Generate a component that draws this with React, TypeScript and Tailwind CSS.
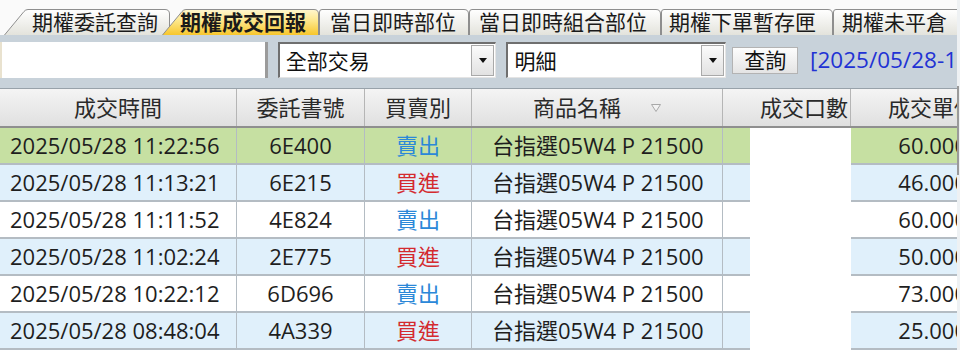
import React from 'react';

const font = "font-['Open_Sans','Noto_Sans_CJK_TC',sans-serif]";

type Tab = { label: string; w: number; cls: string; pad: string; slant?: boolean; active?: boolean };

const tabs: Tab[] = [
  { label: '期權委託查詢', w: 166, cls: 'w-[166px]', pad: 'pl-[28px]', slant: true },
  { label: '期權成交回報', w: 157, cls: 'w-[157px] -ml-[8px] z-10', pad: 'pl-[18px]', slant: true, active: true },
  { label: '當日即時部位', w: 150, cls: 'w-[150px]', pad: 'pl-[11px]' },
  { label: '當日即時組合部位', w: 192, cls: 'w-[192px]', pad: 'pl-[10px]' },
  { label: '期權下單暫存匣', w: 172, cls: 'w-[172px]', pad: 'pl-[8px]' },
  { label: '期權未平倉', w: 130, cls: 'w-[130px] shrink-0', pad: 'pl-[9px]' },
];

type Row = { time: string; no: string; side: '賣出' | '買進'; price: string; bg: string };

const rows: Row[] = [
  { time: '2025/05/28 11:22:56', no: '6E400', side: '賣出', price: '60.000', bg: 'bg-[#c6e0a2]' },
  { time: '2025/05/28 11:13:21', no: '6E215', side: '買進', price: '46.000', bg: 'bg-[#e0f0fb]' },
  { time: '2025/05/28 11:11:52', no: '4E824', side: '賣出', price: '60.000', bg: 'bg-white' },
  { time: '2025/05/28 11:02:24', no: '2E775', side: '買進', price: '50.000', bg: 'bg-[#e0f0fb]' },
  { time: '2025/05/28 10:22:12', no: '6D696', side: '賣出', price: '73.000', bg: 'bg-white' },
  { time: '2025/05/28 08:48:04', no: '4A339', side: '買進', price: '25.000', bg: 'bg-[#e0f0fb]' },
];

function TabShape({ w, slant, active, id }: { w: number; slant?: boolean; active?: boolean; id: string }) {
  const d = slant
    ? `M0.5 26 L20 2.5 Q21.5 0.5 24 0.5 L${w - 5} 0.5 Q${w - 0.5} 0.5 ${w - 0.5} 5 L${w - 0.5} 26`
    : `M0.5 26 L0.5 3 Q0.5 0.5 3 0.5 L${w - 5} 0.5 Q${w - 0.5} 0.5 ${w - 0.5} 5 L${w - 0.5} 26`;
  return (
    <svg className="absolute inset-0" width={w} height={26} viewBox={`0 0 ${w} 26`}>
      <defs>
        <linearGradient id={id} x1="0" y1="0" x2="0" y2="1">
          {active ? (
            <>
              <stop offset="0" stopColor="#fff7cf" />
              <stop offset="0.45" stopColor="#fde78a" />
              <stop offset="1" stopColor="#f7c62c" />
            </>
          ) : (
            <>
              <stop offset="0" stopColor="#ffffff" />
              <stop offset="1" stopColor="#e3e3dc" />
            </>
          )}
        </linearGradient>
      </defs>
      <path d={d} fill={`url(#${id})`} stroke="#8e8e8e" strokeWidth="1" />
    </svg>
  );
}

function Select({ label, cls }: { label: string; cls: string }) {
  return (
    <div className={`${cls} h-[36px] flex bg-white border-t-2 border-l-2 border-[#6f6f6f] border-r border-b border-r-[#e4e4e4] border-b-[#e4e4e4]`}>
      <div className="flex-1 pl-[6px] text-[21px] leading-[34px] text-[#111]">{label}</div>
      <div className="w-[23px] my-[1px] mr-[1px] bg-gradient-to-b from-[#fbfbfb] to-[#e2e2e2] border border-[#a9a9a9] flex items-center justify-center">
        <svg width="8" height="5" viewBox="0 0 8 5">
          <path d="M0 0 H8 L4 5 Z" fill="#111" />
        </svg>
      </div>
    </div>
  );
}

export default function App() {
  return (
    <div className={`w-[960px] h-[350px] overflow-hidden flex bg-white ${font}`}>
      <div className="flex-1 min-w-0 flex flex-col overflow-hidden">
        {/* tab strip */}
        <div className="h-[35px] shrink-0 flex items-end pl-[4px] bg-[#fafafa]">
          {tabs.map((t, i) => (
            <div key={t.label} className={`relative h-[26px] shrink-0 ${t.cls}`}>
              <TabShape w={t.w} slant={t.slant} active={t.active} id={`tabg${i}`} />
              <div className={`relative ${t.pad} text-[21px] leading-[27px] text-[#1a1a1a] whitespace-nowrap ${t.active ? 'font-semibold' : ''}`}>
                {t.label}
              </div>
            </div>
          ))}
        </div>

        {/* toolbar */}
        <div className="h-[53px] shrink-0 flex items-center pb-[3px] bg-[#c8d2da]">
          <div className="w-[268px] h-[36px] bg-white border-r-[3px] border-[#9b9b9b] border-l-2 border-l-[#e9e2cf]" />
          <Select label="全部交易" cls="w-[219px] ml-[10px]" />
          <Select label="明細" cls="w-[220px] ml-[10px]" />
          <button className="ml-[6px] w-[66px] h-[27px] bg-gradient-to-b from-[#fdfdfd] to-[#e4e4e4] border border-[#b3b3b3] text-[21px] leading-[24px] text-[#111]">
            查詢
          </button>
          <div className="ml-[12px] text-[22.5px] text-[#2232d4] whitespace-nowrap">[2025/05/28-1</div>
        </div>

        {/* header */}
        <div className="h-[40px] shrink-0 flex border-t border-[#98a2aa] border-b-2 border-b-[#8f8f8f] bg-gradient-to-b from-[#f4f4f4] to-[#e0e0e0] text-[22px] text-[#2a2a2a]">
          <div className="w-[237px] shrink-0 flex items-center justify-center border-r border-[#b5b5b5]">成交時間</div>
          <div className="w-[128px] shrink-0 flex items-center justify-center border-r border-[#b5b5b5]">委託書號</div>
          <div className="w-[107px] shrink-0 flex items-center justify-center border-r border-[#b5b5b5]">買賣別</div>
          <div className="w-[251px] shrink-0 flex items-center justify-center gap-[30px] border-r border-[#b5b5b5]">
            <span>商品名稱</span>
            <svg width="10" height="8" viewBox="0 0 10 8">
              <path d="M0.5 0.5 H9.5 L5 7.5 Z" fill="#f2f2f2" stroke="#a8a8a8" />
            </svg>
          </div>
          <div className="w-[128px] shrink-0 flex items-center justify-end pr-[2px] border-r border-[#b5b5b5]">成交口數</div>
          <div className="w-[125px] shrink-0 flex items-center justify-end whitespace-nowrap">成交單價</div>
        </div>

        {/* rows */}
        <div className="flex flex-col text-[22px] text-[#1e1e1e]">
          {rows.map((r) => (
            <div key={r.no} className="h-[37px] shrink-0 flex">
              <div className={`w-[237px] shrink-0 flex items-center pl-[10px] border-r border-b-2 border-[#b4bcc3] ${r.bg}`}>{r.time}</div>
              <div className={`w-[128px] shrink-0 flex items-center justify-center border-r border-b-2 border-[#b4bcc3] ${r.bg}`}>{r.no}</div>
              <div className={`w-[107px] shrink-0 flex items-center justify-center border-r border-b-2 border-[#b4bcc3] ${r.bg} ${r.side === '賣出' ? 'text-[#2b88d8]' : 'text-[#d42a2f]'}`}>
                {r.side}
              </div>
              <div className={`w-[251px] shrink-0 flex items-center pl-[20px] border-r border-b-2 border-[#b4bcc3] ${r.bg}`}>台指選05W4 P 21500</div>
              <div className="w-[128px] shrink-0 flex">
                <div className={`w-[27px] border-b-2 border-[#b4bcc3] ${r.bg}`} />
                <div className="flex-1 bg-white" />
              </div>
              <div className={`w-[120px] shrink-0 flex items-center justify-end pr-[4px] border-b-2 border-[#b4bcc3] whitespace-nowrap ${r.bg}`}>{r.price}</div>
            </div>
          ))}
        </div>
      </div>

      {/* scrollbar strip */}
      <div className="w-[3px] shrink-0 bg-[#eef1f3] flex flex-col">
        <div className="mt-[86px] h-[89px] w-[2px] bg-[#9a9a9a]" />
      </div>
    </div>
  );
}
